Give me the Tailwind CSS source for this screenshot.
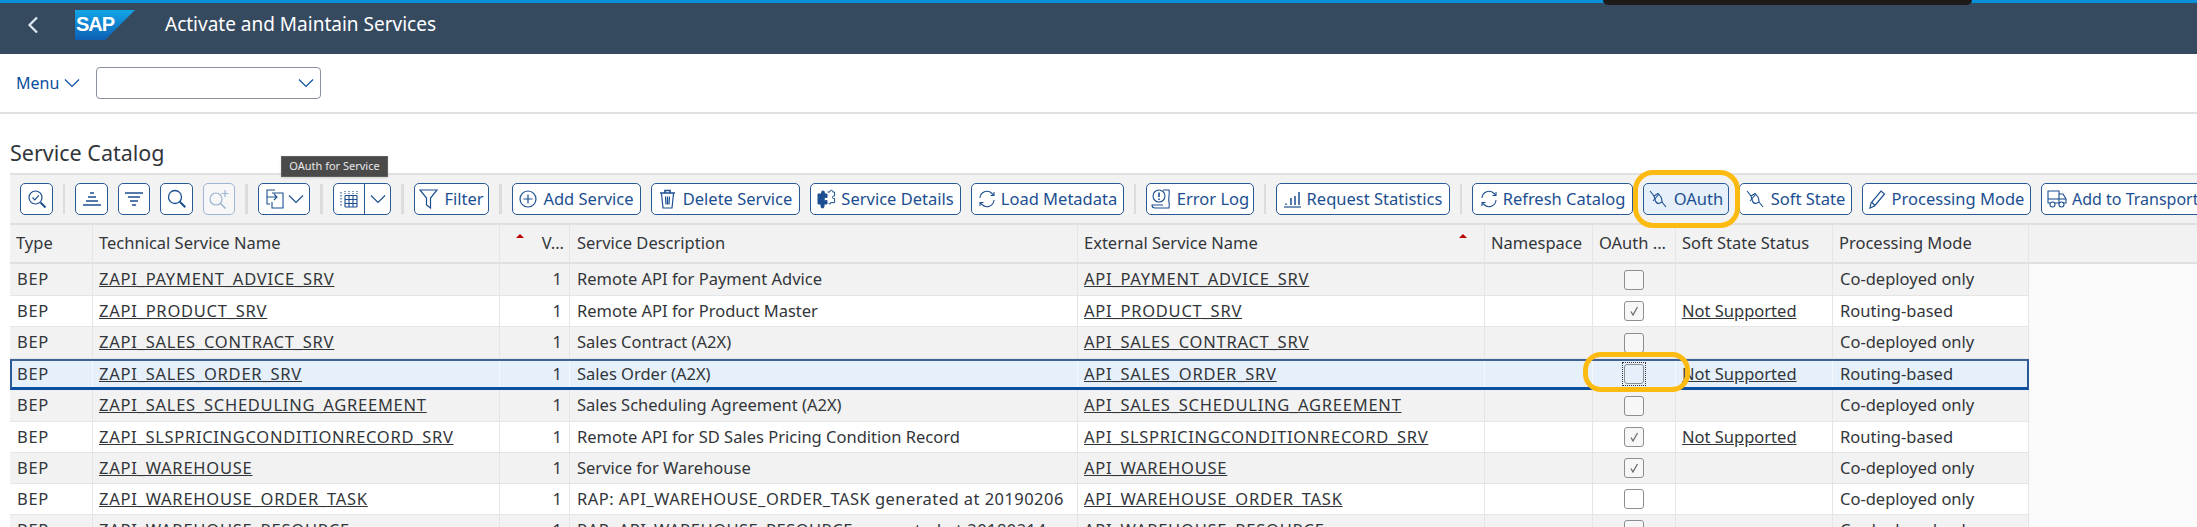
<!DOCTYPE html>
<html lang="en">
<head>
    <meta charset="UTF-8">
    <title>Activate and Maintain Services</title>
    <script src="https://cdn.jsdelivr.net/npm/@tailwindcss/browser@4"></script>
</head>
<body class="relative w-[2197px] h-[527px] overflow-hidden bg-white font-['Noto_Sans',sans-serif] text-[#32363a]">
    <!-- shell bar -->
    <div class="h-[3px] bg-[#0a8fd9]"></div>
    <header class="h-[51px] pb-[8px] bg-[#354a5f] flex items-center text-white">
        <svg class="ml-[27px] w-[12px] h-[18px]" viewBox="0 0 12 18" fill="none" stroke="#dfe9f3" stroke-width="2.2"><path d="M10 1.500 2.500 9l7.500 7.500"/></svg>
        <svg class="ml-[36px] w-[60px] h-[30px]" viewBox="0 0 60 30">
            <defs><linearGradient id="sap" x1="0" y1="0" x2="0" y2="1"><stop offset="0" stop-color="#12a5e8"/><stop offset="1" stop-color="#0d5fb5"/></linearGradient></defs>
            <polygon points="0,0 60,0 30,30 0,30" fill="url(#sap)"/>
            <text x="1" y="21" font-family="Liberation Sans" font-weight="700" font-size="20" letter-spacing="-1" fill="#fff">SAP</text>
        </svg>
        <h1 class="ml-[30px] text-[19px]">Activate and Maintain Services</h1>
    </header>

    <!-- menu row -->
    <div class="h-[60px] border-b-2 border-[#e0e0e0] flex items-center">
        <span class="ml-[16px] text-[16px] text-[#0a4f9e]">Menu</span>
        <svg class="ml-[5px] w-[16px] h-[10px]" viewBox="0 0 16 10" fill="none" stroke="#0a4f9e" stroke-width="1.2"><path d="M1 1.500 8 8.500l7-7"/></svg>
        <div class="ml-[16px] w-[225px] h-[32px] border border-[#89919a] rounded-[4px] flex items-center justify-end pr-[6px]">
            <svg class="w-[16px] h-[10px]" viewBox="0 0 16 10" fill="none" stroke="#0a4f9e" stroke-width="1.2"><path d="M1 1.500 8 8.500l7-7"/></svg>
        </div>
    </div>

    <h2 class="h-[59px] pl-[10px] pt-[25px] text-[21.5px] leading-[28px]">Service Catalog</h2>

    <!-- toolbar -->
    <div class="ml-[10px] h-[50px] bg-[#f2f2f2] border-t-2 border-[#e0e0e0] flex items-center gap-[10px] pl-[10px] overflow-hidden text-[16.500px] text-[#1c4f91] whitespace-nowrap">
        <button class="shrink-0 w-[33px] h-[32px] bg-white border border-[#2a5a96] rounded-[5px] flex items-center justify-center">
            <svg class="w-[20px] h-[20px]" viewBox="0 0 20 20" fill="none" stroke="currentColor" stroke-width="1.2"><circle cx="8.500" cy="8.500" r="6.500"/><path d="m13.500 13.500 5 5" stroke-width="2"/><path d="m5.500 8.500 2.300 2.300 4-4.500"/></svg>
        </button>
        <div class="shrink-0 w-[2px] h-[30px] bg-[#dcdcdc]"></div>
        <button class="shrink-0 w-[33px] h-[32px] bg-white border border-[#2a5a96] rounded-[5px] flex items-center justify-center">
            <svg class="w-[20px] h-[18px]" viewBox="0 0 20 18" fill="none" stroke="currentColor" stroke-width="1.3"><path d="M8 3h4M6 7h8M4 11h12M1 15h18"/></svg>
        </button>
        <button class="shrink-0 w-[32px] h-[32px] bg-white border border-[#2a5a96] rounded-[5px] flex items-center justify-center">
            <svg class="w-[20px] h-[18px]" viewBox="0 0 20 18" fill="none" stroke="currentColor" stroke-width="1.3"><path d="M1 3h18M4 7h12M6 11h8M8 15h4"/></svg>
        </button>
        <button class="shrink-0 w-[33px] h-[32px] bg-white border border-[#2a5a96] rounded-[5px] flex items-center justify-center">
            <svg class="w-[20px] h-[20px]" viewBox="0 0 20 20" fill="none" stroke="currentColor" stroke-width="1.3"><circle cx="8" cy="8" r="6.500"/><path d="m12.800 12.800 5.500 5.500" stroke-width="2"/></svg>
        </button>
        <button class="shrink-0 w-[32px] h-[32px] bg-white/40 border border-[#9db6d3] rounded-[5px] flex items-center justify-center text-[#9db6d3]">
            <svg class="w-[22px] h-[22px]" viewBox="0 0 22 22" fill="none" stroke="currentColor" stroke-width="1.2"><circle cx="8" cy="11" r="6"/><path d="m12.500 15.500 5 5" stroke-width="1.600"/><path d="M17 2v7M13.500 5.500h7"/></svg>
        </button>
        <div class="shrink-0 w-[3px] h-[30px] bg-[#dcdcdc]"></div>
        <button class="shrink-0 w-[52px] h-[32px] bg-white border border-[#2a5a96] rounded-[5px] flex items-center justify-center gap-[3px]">
            <svg class="w-[20px] h-[22px]" viewBox="0 0 20 22" fill="none" stroke="currentColor" stroke-width="1.1"><path d="M10 2H2v14h3M7 5h11v15H7v-6M2 9h10m-3-3 3 3-3 3"/></svg>
            <svg class="w-[16px] h-[10px]" viewBox="0 0 16 10" fill="none" stroke="currentColor" stroke-width="1.2"><path d="M1 1.500 8 8.500l7-7"/></svg>
        </button>
        <div class="shrink-0 w-[3px] h-[30px] bg-[#dcdcdc]"></div>
        <div class="shrink-0 w-[58px] h-[32px] bg-white border border-[#2a5a96] rounded-[5px] flex items-center">
            <div class="w-[31px] h-full border-r border-[#2a5a96] flex items-center justify-center">
                <svg class="w-[18px] h-[18px]" viewBox="0 0 18 18" fill="none" stroke="currentColor" stroke-width="1.1"><path d="M5 5.500h12M5 9.500h12M5 13.500h12M5 17h12M5 5.500V17M9 5.500V17M13 5.500V17M17 5.500V17"/><path d="M1 2v15" stroke-dasharray="1.500 1.500"/><path d="M5 1v4M9 1v4M13 1v4M17 1v4" stroke-dasharray="1 1"/></svg>
            </div>
            <div class="flex-1 flex items-center justify-center">
                <svg class="w-[16px] h-[10px]" viewBox="0 0 16 10" fill="none" stroke="currentColor" stroke-width="1.2"><path d="M1 1.500 8 8.500l7-7"/></svg>
            </div>
        </div>
        <div class="shrink-0 w-[3px] h-[30px] bg-[#dcdcdc]"></div>
        <button class="shrink-0 w-[75px] h-[32px] bg-white border border-[#2a5a96] rounded-[5px] flex items-center justify-center gap-[6px]">
            <svg class="w-[19px] h-[22px]" viewBox="0 0 19 22" fill="none" stroke="currentColor" stroke-width="1.2"><path d="M1 2h17l-6.500 8v10l-4-3v-7z"/></svg>
            Filter
        </button>
        <div class="shrink-0 w-[3px] h-[30px] bg-[#dcdcdc]"></div>
        <button class="shrink-0 w-[129px] h-[32px] bg-white border border-[#2a5a96] rounded-[5px] flex items-center justify-center gap-[6px]">
            <svg class="w-[18px] h-[18px]" viewBox="0 0 18 18" fill="none" stroke="currentColor" stroke-width="1.2"><circle cx="9" cy="9" r="8"/><path d="M9 4.500v9M4.500 9h9"/></svg>
            Add Service
        </button>
        <button class="shrink-0 w-[149px] h-[32px] bg-white border border-[#2a5a96] rounded-[5px] flex items-center justify-center gap-[7px]">
            <svg class="w-[17px] h-[20px]" viewBox="0 0 17 20" fill="none" stroke="currentColor" stroke-width="1.2"><path d="M1 4h15M6 4V1.500h5V4" stroke-width="1.600"/><path d="M2.500 4.500 4 19h9l1.500-14.500M6.500 7.500l.5 8M8.500 7.500v8M10.500 7.500l-.5 8"/></svg>
            Delete Service
        </button>
        <button class="shrink-0 w-[151px] h-[32px] bg-white border border-[#2a5a96] rounded-[5px] flex items-center justify-center gap-[5px]">
            <svg class="w-[19px] h-[20px]" viewBox="0 0 19 20" fill="none" stroke="currentColor" stroke-width="1"><path d="M1 5h3.500V3.500a1.500 1.500 0 0 1 3 0V5H10v3.500H8.500a1.500 1.500 0 0 0 0 3H10V15H7v2.500a1.500 1.500 0 0 1-3 0V15H1z" fill="currentColor"/><path d="M10.500 3H13v-.5a1.300 1.300 0 0 1 2.600 0V3h2v4h-.8a1.300 1.300 0 0 0 0 2.600h.8v4h-4v1.200h-2"/></svg>
            Service Details
        </button>
        <button class="shrink-0 w-[153px] h-[32px] bg-white border border-[#2a5a96] rounded-[5px] flex items-center justify-center gap-[5px]">
            <svg class="w-[18px] h-[18px]" viewBox="0 0 18 18" fill="none" stroke="currentColor" stroke-width="1.1"><path d="M2 8a7 7 0 0 1 12-4.500l1.500 1.500M16 10a7 7 0 0 1-12 4.500L2.500 13"/><path d="M16 2v3.500h-3.500M2 16v-3.500h3.500"/></svg>
            Load Metadata
        </button>
        <div class="shrink-0 w-[2px] h-[30px] bg-[#dcdcdc]"></div>
        <button class="shrink-0 w-[108px] h-[32px] bg-white border border-[#2a5a96] rounded-[5px] flex items-center justify-center gap-[6px]">
            <svg class="w-[20px] h-[22px]" viewBox="0 0 20 22" fill="none" stroke="currentColor" stroke-width="1.1"><circle cx="8" cy="8" r="6"/><path d="M8 4.500v4.500" stroke-width="1.600"/><path d="M8 10.500v1.500" stroke-width="1.600"/><path d="M12 2h6c1 4-1 8 0 12 .5 3 0 6 0 6H4c-2 0-3-1-3-3h11"/></svg>
            Error Log
        </button>
        <div class="shrink-0 w-[2px] h-[30px] bg-[#dcdcdc]"></div>
        <button class="shrink-0 w-[174px] h-[32px] bg-white border border-[#2a5a96] rounded-[5px] flex items-center justify-center gap-[6px]">
            <svg class="w-[17px] h-[18px]" viewBox="0 0 17 18" fill="none" stroke="currentColor" stroke-width="1.500"><path d="M0 17h17" stroke-width="1.200"/><path d="M2 15v-1.500M7 15V8M11 15V6M15 15V2"/></svg>
            Request Statistics
        </button>
        <div class="shrink-0 w-[2px] h-[30px] bg-[#dcdcdc]"></div>
        <button class="shrink-0 w-[161px] h-[32px] bg-white border border-[#2a5a96] rounded-[5px] flex items-center justify-center gap-[5px]">
            <svg class="w-[18px] h-[18px]" viewBox="0 0 18 18" fill="none" stroke="currentColor" stroke-width="1.1"><path d="M2 8a7 7 0 0 1 12-4.500l1.500 1.500M16 10a7 7 0 0 1-12 4.500L2.500 13"/><path d="M16 2v3.500h-3.500M2 16v-3.500h3.500"/></svg>
            Refresh Catalog
        </button>
        <button class="shrink-0 w-[86px] h-[32px] bg-[#e5f0fa] border border-[#2a5a96] rounded-[5px] flex items-center justify-center gap-[7px]">
            <svg class="w-[18px] h-[18px]" viewBox="0 0 18 18" fill="none" stroke="currentColor" stroke-width="1.100"><path d="M1 1l4 5M13 12l4 5"/><path d="M5 6 9 3.500l3 3.500c1 2 1 3 1 5l-3 1.500c-2 0-3-1-3.500-2.500z"/><path d="M4 11l6-7"/></svg>
            OAuth
        </button>
        <button class="shrink-0 w-[113px] h-[32px] bg-white border border-[#2a5a96] rounded-[5px] flex items-center justify-center gap-[7px]">
            <svg class="w-[18px] h-[18px]" viewBox="0 0 18 18" fill="none" stroke="currentColor" stroke-width="1.100"><path d="M1 1l4 5M13 12l4 5"/><path d="M5 6 9 3.500l3 3.500c1 2 1 3 1 5l-3 1.500c-2 0-3-1-3.500-2.500z"/><path d="M4 11l6-7"/></svg>
            Soft State
        </button>
        <button class="shrink-0 w-[169px] h-[32px] bg-white border border-[#2a5a96] rounded-[5px] flex items-center justify-center gap-[6px]">
            <svg class="w-[17px] h-[20px]" viewBox="0 0 17 20" fill="none" stroke="currentColor" stroke-width="1.200"><path d="M1 19l1-5L12 2l3.500 3L5.500 17z"/><path d="M3 13.500l3 3"/></svg>
            Processing Mode
        </button>
        <button class="shrink-0 w-[170px] h-[32px] bg-white border border-[#2a5a96] rounded-[5px] flex items-center gap-[5px] pl-[5px] text-[16px]">
            <svg class="w-[20px] h-[20px]" viewBox="0 0 20 20" fill="none" stroke="currentColor" stroke-width="1.100"><path d="M3 14H1V2h11v12H8M12 5h4l3 5v4h-3M12 14h1"/><path d="M1 10h18"/><circle cx="5.500" cy="15.500" r="2.500"/><circle cx="14.500" cy="15.500" r="2.500"/></svg>
            Add to Transport
        </button>
    </div>

    <!-- table -->
    <div class="ml-[10px] h-[304px] bg-[#fafafa] text-[16.500px] whitespace-nowrap overflow-hidden">
        <div class="grid grid-cols-[83px_407px_70px_508px_407px_108px_83px_157px_196px_1fr] h-[41px] bg-[#f2f2f2] border-t-2 border-b-2 border-[#e0e0e0] items-stretch">
            <div class="flex items-center pl-[6px] border-r border-[#e5e5e5]">Type</div>
            <div class="flex items-center pl-[6px] border-r border-[#e5e5e5] relative">Technical Service Name<span class="absolute right-[-25px] top-[9px] w-0 h-0 border-x-[4px] border-x-transparent border-b-[4px] border-b-[#bb0000]"></span></div>
            <div class="flex items-center justify-end pr-[5px] border-r border-[#e5e5e5]">V...</div>
            <div class="flex items-center pl-[7px] border-r border-[#e5e5e5]">Service Description</div>
            <div class="flex items-center pl-[6px] border-r border-[#e5e5e5] relative">External Service Name<span class="absolute right-[17px] top-[9px] w-0 h-0 border-x-[4px] border-x-transparent border-b-[4px] border-b-[#bb0000]"></span></div>
            <div class="flex items-center pl-[6px] border-r border-[#e5e5e5]">Namespace</div>
            <div class="flex items-center pl-[6px] border-r border-[#e5e5e5]">OAuth ...</div>
            <div class="flex items-center pl-[6px] border-r border-[#e5e5e5]">Soft State Status</div>
            <div class="flex items-center pl-[6px] border-r border-[#e5e5e5]">Processing Mode</div>
            <div></div>
        </div>

        <div class="w-[2019px] grid grid-cols-[83px_407px_70px_508px_407px_108px_83px_157px_196px] h-[32px] bg-[#f2f2f2] border-b border-[#e5e5e5] items-stretch">
            <div class="flex items-center pl-[7px] border-r border-[#e5e5e5] tracking-[0.7px]">BEP</div>
            <div class="flex items-center pl-[6px] border-r border-[#e5e5e5] underline tracking-[0.75px]">ZAPI_PAYMENT_ADVICE_SRV</div>
            <div class="flex items-center justify-end pr-[7px] border-r border-[#e5e5e5]">1</div>
            <div class="flex items-center pl-[7px] border-r border-[#e5e5e5]">Remote API for Payment Advice</div>
            <div class="flex items-center pl-[6px] border-r border-[#e5e5e5] underline tracking-[0.75px]">API_PAYMENT_ADVICE_SRV</div>
            <div class="border-r border-[#e5e5e5]"></div>
            <div class="flex items-center justify-center border-r border-[#e5e5e5]"><div class="w-[20px] h-[20px] border border-[#8a8f94] rounded-[3px] bg-white/40"></div></div>
            <div class="border-r border-[#e5e5e5]"></div>
            <div class="flex items-center pl-[7px] border-r border-[#e5e5e5]">Co-deployed only</div>
        </div>
        <div class="w-[2019px] grid grid-cols-[83px_407px_70px_508px_407px_108px_83px_157px_196px] h-[31px] bg-white border-b border-[#e5e5e5] items-stretch">
            <div class="flex items-center pl-[7px] border-r border-[#e5e5e5] tracking-[0.7px]">BEP</div>
            <div class="flex items-center pl-[6px] border-r border-[#e5e5e5] underline tracking-[0.75px]">ZAPI_PRODUCT_SRV</div>
            <div class="flex items-center justify-end pr-[7px] border-r border-[#e5e5e5]">1</div>
            <div class="flex items-center pl-[7px] border-r border-[#e5e5e5]">Remote API for Product Master</div>
            <div class="flex items-center pl-[6px] border-r border-[#e5e5e5] underline tracking-[0.75px]">API_PRODUCT_SRV</div>
            <div class="border-r border-[#e5e5e5]"></div>
            <div class="flex items-center justify-center border-r border-[#e5e5e5]"><div class="w-[20px] h-[20px] border border-[#8a8f94] rounded-[3px] bg-[#f7f7f7] flex items-center justify-center"><svg class="w-[12px] h-[12px]" viewBox="0 0 12 12" fill="none" stroke="#6a6d70" stroke-width="1.300"><path d="M3 6.500l2 3.500L9.500 2"/></svg></div></div>
            <div class="flex items-center pl-[6px] border-r border-[#e5e5e5] underline">Not Supported</div>
            <div class="flex items-center pl-[7px] border-r border-[#e5e5e5]">Routing-based</div>
        </div>
        <div class="w-[2019px] grid grid-cols-[83px_407px_70px_508px_407px_108px_83px_157px_196px] h-[32px] bg-[#f2f2f2] border-b border-[#e5e5e5] items-stretch">
            <div class="flex items-center pl-[7px] border-r border-[#e5e5e5] tracking-[0.7px]">BEP</div>
            <div class="flex items-center pl-[6px] border-r border-[#e5e5e5] underline tracking-[0.75px]">ZAPI_SALES_CONTRACT_SRV</div>
            <div class="flex items-center justify-end pr-[7px] border-r border-[#e5e5e5]">1</div>
            <div class="flex items-center pl-[7px] border-r border-[#e5e5e5]">Sales Contract (A2X)</div>
            <div class="flex items-center pl-[6px] border-r border-[#e5e5e5] underline tracking-[0.75px]">API_SALES_CONTRACT_SRV</div>
            <div class="border-r border-[#e5e5e5]"></div>
            <div class="flex items-center justify-center border-r border-[#e5e5e5]"><div class="w-[20px] h-[20px] border border-[#8a8f94] rounded-[3px] bg-white/40"></div></div>
            <div class="border-r border-[#e5e5e5]"></div>
            <div class="flex items-center pl-[7px] border-r border-[#e5e5e5]">Co-deployed only</div>
        </div>
        <!-- selected row -->
        <div class="w-[2019px] grid grid-cols-[81px_407px_70px_508px_407px_108px_83px_157px_194px] h-[31px] bg-[#e5f0fa] border-t-2 border-b-[3px] border-x-2 border-t-[#3f6396] border-b-[#0a4fa0] border-x-[#2a5a96] items-stretch">
            <div class="flex items-center pl-[5px] border-r border-[#f5f9fd] tracking-[0.7px]">BEP</div>
            <div class="flex items-center pl-[6px] border-r border-[#f5f9fd] underline tracking-[0.75px]">ZAPI_SALES_ORDER_SRV</div>
            <div class="flex items-center justify-end pr-[7px] border-r border-[#f5f9fd]">1</div>
            <div class="flex items-center pl-[7px] border-r border-[#f5f9fd]">Sales Order (A2X)</div>
            <div class="flex items-center pl-[6px] border-r border-[#f5f9fd] underline tracking-[0.75px]">API_SALES_ORDER_SRV</div>
            <div class="border-r border-[#f5f9fd]"></div>
            <div class="flex items-center justify-center border-r border-[#f5f9fd]"><div class="p-[1px] outline-1 outline-dotted outline-[#32363a]"><div class="w-[20px] h-[20px] border border-[#8a8f94] rounded-[3px]"></div></div></div>
            <div class="flex items-center pl-[6px] border-r border-[#f5f9fd] underline">Not Supported</div>
            <div class="flex items-center pl-[7px]">Routing-based</div>
        </div>
        <div class="w-[2019px] grid grid-cols-[83px_407px_70px_508px_407px_108px_83px_157px_196px] h-[32px] bg-[#f2f2f2] border-b border-[#e5e5e5] items-stretch">
            <div class="flex items-center pl-[7px] border-r border-[#e5e5e5] tracking-[0.7px]">BEP</div>
            <div class="flex items-center pl-[6px] border-r border-[#e5e5e5] underline tracking-[0.75px]">ZAPI_SALES_SCHEDULING_AGREEMENT</div>
            <div class="flex items-center justify-end pr-[7px] border-r border-[#e5e5e5]">1</div>
            <div class="flex items-center pl-[7px] border-r border-[#e5e5e5]">Sales Scheduling Agreement (A2X)</div>
            <div class="flex items-center pl-[6px] border-r border-[#e5e5e5] underline tracking-[0.75px]">API_SALES_SCHEDULING_AGREEMENT</div>
            <div class="border-r border-[#e5e5e5]"></div>
            <div class="flex items-center justify-center border-r border-[#e5e5e5]"><div class="w-[20px] h-[20px] border border-[#8a8f94] rounded-[3px] bg-white/40"></div></div>
            <div class="border-r border-[#e5e5e5]"></div>
            <div class="flex items-center pl-[7px] border-r border-[#e5e5e5]">Co-deployed only</div>
        </div>
        <div class="w-[2019px] grid grid-cols-[83px_407px_70px_508px_407px_108px_83px_157px_196px] h-[31px] bg-white border-b border-[#e5e5e5] items-stretch">
            <div class="flex items-center pl-[7px] border-r border-[#e5e5e5] tracking-[0.7px]">BEP</div>
            <div class="flex items-center pl-[6px] border-r border-[#e5e5e5] underline tracking-[0.7px]">ZAPI_SLSPRICINGCONDITIONRECORD_SRV</div>
            <div class="flex items-center justify-end pr-[7px] border-r border-[#e5e5e5]">1</div>
            <div class="flex items-center pl-[7px] border-r border-[#e5e5e5]">Remote API for SD Sales Pricing Condition Record</div>
            <div class="flex items-center pl-[6px] border-r border-[#e5e5e5] underline tracking-[0.7px]">API_SLSPRICINGCONDITIONRECORD_SRV</div>
            <div class="border-r border-[#e5e5e5]"></div>
            <div class="flex items-center justify-center border-r border-[#e5e5e5]"><div class="w-[20px] h-[20px] border border-[#8a8f94] rounded-[3px] bg-[#f7f7f7] flex items-center justify-center"><svg class="w-[12px] h-[12px]" viewBox="0 0 12 12" fill="none" stroke="#6a6d70" stroke-width="1.300"><path d="M3 6.500l2 3.500L9.500 2"/></svg></div></div>
            <div class="flex items-center pl-[6px] border-r border-[#e5e5e5] underline">Not Supported</div>
            <div class="flex items-center pl-[7px] border-r border-[#e5e5e5]">Routing-based</div>
        </div>
        <div class="w-[2019px] grid grid-cols-[83px_407px_70px_508px_407px_108px_83px_157px_196px] h-[31px] bg-[#f2f2f2] border-b border-[#e5e5e5] items-stretch">
            <div class="flex items-center pl-[7px] border-r border-[#e5e5e5] tracking-[0.7px]">BEP</div>
            <div class="flex items-center pl-[6px] border-r border-[#e5e5e5] underline tracking-[0.75px]">ZAPI_WAREHOUSE</div>
            <div class="flex items-center justify-end pr-[7px] border-r border-[#e5e5e5]">1</div>
            <div class="flex items-center pl-[7px] border-r border-[#e5e5e5]">Service for Warehouse</div>
            <div class="flex items-center pl-[6px] border-r border-[#e5e5e5] underline tracking-[0.75px]">API_WAREHOUSE</div>
            <div class="border-r border-[#e5e5e5]"></div>
            <div class="flex items-center justify-center border-r border-[#e5e5e5]"><div class="w-[20px] h-[20px] border border-[#8a8f94] rounded-[3px] bg-[#f7f7f7] flex items-center justify-center"><svg class="w-[12px] h-[12px]" viewBox="0 0 12 12" fill="none" stroke="#6a6d70" stroke-width="1.300"><path d="M3 6.500l2 3.500L9.500 2"/></svg></div></div>
            <div class="border-r border-[#e5e5e5]"></div>
            <div class="flex items-center pl-[7px] border-r border-[#e5e5e5]">Co-deployed only</div>
        </div>
        <div class="w-[2019px] grid grid-cols-[83px_407px_70px_508px_407px_108px_83px_157px_196px] h-[31px] bg-white border-b border-[#e5e5e5] items-stretch">
            <div class="flex items-center pl-[7px] border-r border-[#e5e5e5] tracking-[0.7px]">BEP</div>
            <div class="flex items-center pl-[6px] border-r border-[#e5e5e5] underline tracking-[0.75px]">ZAPI_WAREHOUSE_ORDER_TASK</div>
            <div class="flex items-center justify-end pr-[7px] border-r border-[#e5e5e5]">1</div>
            <div class="flex items-center pl-[7px] border-r border-[#e5e5e5] tracking-[0.45px]">RAP: API_WAREHOUSE_ORDER_TASK generated at 20190206</div>
            <div class="flex items-center pl-[6px] border-r border-[#e5e5e5] underline tracking-[0.75px]">API_WAREHOUSE_ORDER_TASK</div>
            <div class="border-r border-[#e5e5e5]"></div>
            <div class="flex items-center justify-center border-r border-[#e5e5e5]"><div class="w-[20px] h-[20px] border border-[#8a8f94] rounded-[3px] bg-white/40"></div></div>
            <div class="border-r border-[#e5e5e5]"></div>
            <div class="flex items-center pl-[7px] border-r border-[#e5e5e5]">Co-deployed only</div>
        </div>
        <div class="w-[2019px] grid grid-cols-[83px_407px_70px_508px_407px_108px_83px_157px_196px] h-[31px] bg-[#f2f2f2] border-b border-[#e5e5e5] items-stretch">
            <div class="flex items-center pl-[7px] border-r border-[#e5e5e5] tracking-[0.7px]">BEP</div>
            <div class="flex items-center pl-[6px] border-r border-[#e5e5e5] underline tracking-[0.75px]">ZAPI_WAREHOUSE_RESOURCE</div>
            <div class="flex items-center justify-end pr-[7px] border-r border-[#e5e5e5]">1</div>
            <div class="flex items-center pl-[7px] border-r border-[#e5e5e5] tracking-[0.45px]">RAP: API_WAREHOUSE_RESOURCE generated at 20180214</div>
            <div class="flex items-center pl-[6px] border-r border-[#e5e5e5] underline tracking-[0.75px]">API_WAREHOUSE_RESOURCE</div>
            <div class="border-r border-[#e5e5e5]"></div>
            <div class="flex items-center justify-center border-r border-[#e5e5e5]"><div class="w-[20px] h-[20px] border border-[#8a8f94] rounded-[3px] bg-white/40"></div></div>
            <div class="border-r border-[#e5e5e5]"></div>
            <div class="flex items-center pl-[7px] border-r border-[#e5e5e5]">Co-deployed only</div>
        </div>
    </div>

    <!-- overlays: tooltip, window popup, annotation rings -->
    <div class="absolute left-[281px] top-[156px] w-[107px] h-[21px] bg-[#4a4a4a] border border-[#5e5e5e] shadow flex items-center justify-center text-[11px] text-[#e8e8e8]">OAuth for Service</div>
    <div class="absolute left-[1603px] top-0 w-[369px] h-[5px] bg-[#1d1a19] rounded-b-[5px] shadow-lg"></div>
    <div class="absolute left-[1633px] top-[170px] w-[107px] h-[58px] border-[5px] border-[#fdbb11] rounded-[20px]"></div>
    <div class="absolute left-[1583px] top-[352px] w-[107px] h-[40px] border-[5px] border-[#fdbb11] rounded-[18px]"></div>
</body>
</html>
